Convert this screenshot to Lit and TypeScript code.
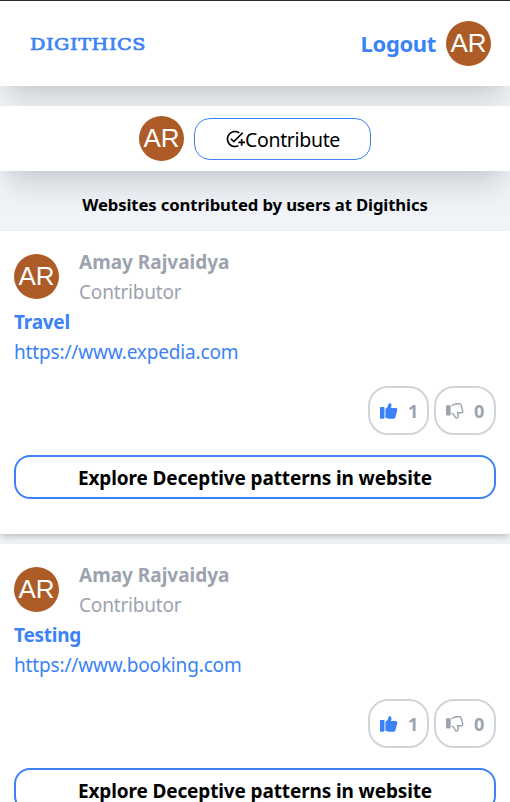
import { LitElement, html, css, svg } from "lit";
import { customElement, property } from "lit/decorators.js";

@customElement("user-avatar")
class UserAvatar extends LitElement {
  static styles = css`
    :host { display: flex; flex: none; width: 45px; height: 45px; border-radius: 50%; background: #ad5b27; color: #fff;
      align-items: center; justify-content: center; font: 26px/45px "Liberation Sans", Arial, sans-serif; }
  `;
  render() { return html`<span>AR</span>`; }
}

@customElement("vote-pill")
class VotePill extends LitElement {
  @property({ type: Boolean }) up = false;
  @property({ type: Number }) count = 0;
  static styles = css`
    :host { box-sizing: border-box; display: flex; align-items: center; height: 49px; width: 61px; padding-left: 10px;
      border: 2px solid #d1d5db; border-radius: 20px; color: #9ca3af; font-weight: 700; font-size: 18px; }
    :host(:not([up])) { width: 62px; }
    svg { width: 18px; height: 16px; flex: none; }
    .up { color: #3b82f6; }
    span { margin-left: 10px; }
  `;
  render() {
    return html`<svg class=${this.up ? "up" : "down"} viewBox="0 0 18 16" fill="currentColor">${this.up
      ? svg`<rect y="4" width="4.500" height="11.700" rx=".8"/><path d="M5.400 6C7 4.900 8.200 3.200 8.400 1.200 8.600-.2 11.500-.2 11.500 2.200c0 1.200-.3 2.100-.6 2.900h4.700c1.300 0 1.900 1 1.600 2.200L15.500 13.900c-.4 1.300-1.200 1.800-2.400 1.800H9c-1.600 0-2.700-.5-3.600-1.200z"/>`
      : svg`<rect y="2.200" width="4.700" height="10.200" rx=".8"/><path d="M5.600 2.900C7.200 1.800 8.500 1 10 .8h3.600c1.200 0 1.400.8 1.600 1.600l1.400 5.200c.4 1.400-.3 2.200-1.600 2.200h-3.400c0 1.200.6 2.200.6 3.400 0 1.800-2.200 2.400-2.900 1.200C8.800 12.600 8.200 10.800 5.600 9.800" fill="none" stroke="currentColor" stroke-width="1.400"/>`}</svg>
      <span>${this.count}</span>`;
  }
}

@customElement("site-card")
class SiteCard extends LitElement {
  @property() name = "";
  @property() url = "";
  static styles = css`
    :host { box-sizing: border-box; display: block; height: 303px; padding: 16px 14px 0; background: #fff;
      border-radius: 0 0 2px 2px; font-size: 19px; line-height: 30px;
      box-shadow: 0 5px 8px -2px rgba(0,0,0,.15), 0 2px 5px -1px rgba(0,0,0,.12); }
    .person { display: flex; align-items: flex-start; gap: 20px; color: #9ca3af; height: 60px; }
    user-avatar { margin-top: 7px; }
    .person b, .person span { display: block; }
    .role { letter-spacing: -.18px; }
    .title { color: #3b82f6; font-weight: 700; letter-spacing: -.25px; }
    .link { color: #3b82f6; letter-spacing: -.16px; }
    .votes { display: flex; justify-content: flex-end; gap: 5px; margin-top: 19px; }
    .explore { box-sizing: border-box; height: 44px; margin-top: 20px; border: 2px solid #3b82f6; border-radius: 16px;
      color: #000; font-weight: 700; line-height: 42px; text-align: center; letter-spacing: -.13px; }
    .t { display: block; width: max-content; }
    .explore .t { margin: 0 auto; }
  `;
  render() {
    return html`<div class="person"><user-avatar></user-avatar><div><b class="t">Amay Rajvaidya</b><span class="t role">Contributor</span></div></div>
      <div class="title t">${this.name}</div><div class="link t">${this.url}</div>
      <div class="votes"><vote-pill up count="1"></vote-pill><vote-pill count="0"></vote-pill></div>
      <div class="explore"><span class="t">Explore Deceptive patterns in website</span></div>`;
  }
}

@customElement("app-root")
class AppRoot extends LitElement {
  static styles = css`
    :host { box-sizing: border-box; display: flex; flex-direction: column; height: 802px; overflow: hidden; background: #f0f4f9;
      border-top: 1px solid #2b2a2d; font-family: "Noto Sans", "Open Sans", sans-serif; }
    .bar { flex: none; box-sizing: border-box; display: flex; align-items: center; background: #fff;
      box-shadow: 0 22px 30px -8px rgba(0,0,0,.15), 0 6px 10px -6px rgba(0,0,0,.06); }
    .head { height: 85px; padding: 0 19px 0 30px; justify-content: space-between; }
    .logo { color: #3b82f6; font: 400 17px/20px "DejaVu Serif", serif; letter-spacing: .5px;
      -webkit-text-stroke: .7px #3b82f6; transform: scaleX(1.13); transform-origin: left; }
    .right { display: flex; align-items: center; gap: 10px; color: #3b82f6; font-size: 22px; font-weight: 700; }
    .logout { letter-spacing: -.35px; padding-bottom: 2px; }
    .sub { height: 65px; margin-top: 20px; justify-content: center; gap: 10px; }
    .add { box-sizing: border-box; width: 177px; height: 42px; border: 1px solid #3b82f6; border-radius: 16px;
      display: flex; align-items: center; justify-content: center; font-size: 19.5px; letter-spacing: -.33px; }
    .add svg { width: 20px; height: 20px; }
    .add span { padding-top: 1px; }
    h1 { position: relative; margin: 0; height: 60px; flex: none; font-size: 16.7px; letter-spacing: -.12px; line-height: 67px; text-align: center; }
    .list { position: relative; display: flex; flex-direction: column; gap: 10px; }
  `;
  render() {
    return html`
      <div class="bar head"><span class="logo">DIGITHICS</span><div class="right"><span class="logout">Logout</span><user-avatar></user-avatar></div></div>
      <div class="bar sub"><user-avatar></user-avatar><div class="add">
        <svg viewBox="0 0 24 24" fill="currentColor"><path d="M22 5.180 10.590 16.600l-4.240-4.240 1.410-1.410 2.830 2.830 10-10L22 5.180zM12 20c-4.410 0-8-3.590-8-8s3.590-8 8-8c1.570 0 3.040.460 4.280 1.250l1.450-1.450C16.100 2.670 14.130 2 12 2 6.480 2 2 6.480 2 12s4.480 10 10 10c1.730 0 3.360-.440 4.780-1.220l-1.500-1.500c-1 .460-2.110.720-3.280.720zm7-5h-3v2h3v3h2v-3h3v-2h-3v-3h-2v3z"/></svg>
        <span>Contribute</span></div></div>
      <h1><span>Websites contributed by users at Digithics</span></h1>
      <div class="list"><site-card name="Travel" url="https://www.expedia.com"></site-card><site-card name="Testing" url="https://www.booking.com"></site-card></div>`;
  }
}
